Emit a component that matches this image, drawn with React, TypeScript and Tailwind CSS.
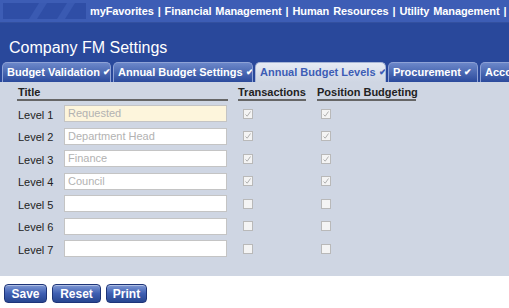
import React from 'react';

const tabs = [
  { name: 'Budget Validation', w: 'w-[109px]' },
  { name: 'Annual Budget Settings', w: 'w-[140px]' },
  { name: 'Annual Budget Levels', w: 'w-[131px]', active: true },
  { name: 'Procurement', w: 'w-[90px]' },
  { name: 'Accounts', w: 'w-[60px]' },
];

const levels = [
  { n: 1, title: 'Requested', on: true, locked: true },
  { n: 2, title: 'Department Head', on: true },
  { n: 3, title: 'Finance', on: true },
  { n: 4, title: 'Council', on: true },
  { n: 5, title: '' },
  { n: 6, title: '' },
  { n: 7, title: '' },
];

const Check = ({ on }: { on?: boolean }) => (
  <div className="w-[10px] h-[10px] border border-[#b9b9b9] bg-[#f4f4f4] flex items-center justify-center">
    {on && (
      <svg width="8" height="8" viewBox="0 0 8 8">
        <path d="M1.5 4.5 L3.2 6.2 L6.5 1.5" fill="none" stroke="#b0b0b0" strokeWidth="1" />
      </svg>
    )}
  </div>
);

const Btn = ({ label, w }: { label: string; w: string }) => (
  <button
    className={`${w} h-[19px] rounded-[4px] border border-[#1d3478] bg-gradient-to-b from-[#7f98d4] via-[#3f5fb2] to-[#274690] text-white text-[12px] font-bold leading-none shadow-[inset_0_1px_0_rgba(255,255,255,0.4)]`}
  >
    {label}
  </button>
);

export default function App() {
  return (
    <div className="w-[509px] h-[308px] overflow-hidden bg-white" style={{ fontFamily: '"Liberation Sans", Arial, sans-serif' }}>
      <div className="h-[23px] bg-[#3d5db5] border-b border-[#33509f] flex items-center pl-[3px]">
        <svg width="83" height="16" viewBox="0 0 83 16" className="shrink-0">
          <rect width="83" height="16" fill="#2f4ea6" />
          <path d="M26 16 L36 0 L44 0 L34 16 Z" fill="#3a5ab2" />
          <path d="M54 16 L64 0 L72 0 L62 16 Z" fill="#3a5ab2" />
        </svg>
        <div className="ml-[4px] text-white text-[11px] font-bold whitespace-nowrap tracking-[-0.1px] [word-spacing:1px]">
          myFavorites | Financial Management | Human Resources | Utility Management | ⌂
        </div>
      </div>
      <div className="h-[38px] bg-[#29489b] flex items-end px-[9px] pb-[5px]">
        <span className="text-white text-[16px] leading-none">Company FM Settings</span>
      </div>
      <div className="h-[21px] bg-[#29489b] flex items-end gap-[2px] pl-[2px]">
        {tabs.map((t) => (
          <div
            key={t.name}
            className={`${t.w} shrink-0 h-[20px] rounded-t-[5px] border border-b-0 flex items-center pl-[4px] overflow-hidden whitespace-nowrap text-[11px] font-bold ${
              t.active
                ? 'bg-gradient-to-b from-[#e6ebf4] to-[#cfd6e3] border-[#a8b6d6] text-[#3d5db5]'
                : 'bg-gradient-to-b from-[#6c87c9] to-[#2b4a9c] border-[#8ea2d6] text-white'
            }`}
          >
            {t.name}
            <span className="ml-[3px] text-[9px]">✔</span>
          </div>
        ))}
      </div>
      <div className="h-[194px] bg-[#cfd6e3] pl-[17px] pt-[4px] text-[11px] text-[#222]">
        <div className="flex font-bold h-[15px] whitespace-nowrap">
          <div className="w-[211px] border-b-2 border-[#666] pl-[1px] leading-[13px]">Title</div>
          <div className="ml-[10px] w-[68px] border-b-2 border-[#666] leading-[13px]">Transactions</div>
          <div className="ml-[11px] w-[99px] border-b-2 border-[#666] leading-[13px]">Position Budgeting</div>
        </div>
        <div className="mt-[4px] flex flex-col gap-[5px]">
          {levels.map((l) => (
            <div key={l.n} className="flex items-center h-[17.5px]">
              <div className="w-[47px] pl-[1px] mt-[2px]">Level {l.n}</div>
              <div
                className={`w-[163px] h-[17px] border border-[#c4c4c4] text-[11px] leading-[15px] pl-[3px] text-[#b2b2b2] ${
                  l.locked ? 'bg-[#fdf5dc]' : 'bg-white'
                }`}
              >
                {l.title}
              </div>
              <div className="ml-[16px]">
                <Check on={l.on} />
              </div>
              <div className="ml-[68px]">
                <Check on={l.on} />
              </div>
            </div>
          ))}
        </div>
      </div>
      <div className="flex gap-[5px] pl-[4px] pt-[8px]">
        <Btn label="Save" w="w-[43px]" />
        <Btn label="Reset" w="w-[49px]" />
        <Btn label="Print" w="w-[41px]" />
      </div>
    </div>
  );
}
